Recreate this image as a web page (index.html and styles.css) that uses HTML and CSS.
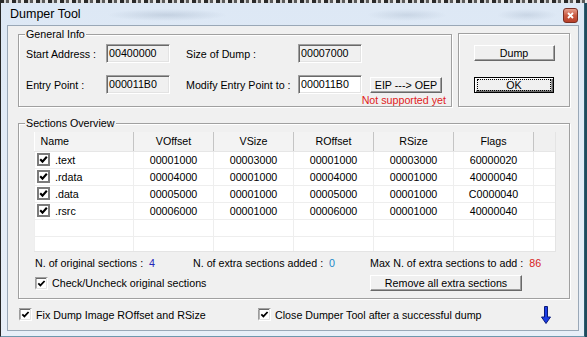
FILE: index.html
```html
<!DOCTYPE html>
<html lang="en">
<head>
    <meta charset="UTF-8">
    <title>Dumper Tool</title>
    <link rel="stylesheet" href="styles.css">
</head>
<body>
    <svg class="defs" width="0" height="0">
        <symbol id="chk-list" viewBox="0 0 13 13">
            <rect x="1" y="1" width="11" height="11" fill="#fff" stroke="#7b7b7b" stroke-width="2"/>
            <path d="M3.2 6.2l2.3 2.4 4.3-4.8" fill="none" stroke="#000" stroke-width="2.1"/>
        </symbol>
        <symbol id="chk" viewBox="0 0 13 13">
            <rect x="0" y="0" width="13" height="13" fill="#fff"/>
            <path d="M0 12.5V0.5H12.5" fill="none" stroke="#a0a0a0"/>
            <path d="M1 11.5V1.5H11.5" fill="none" stroke="#696969"/>
            <path d="M1.5 11.5H11.5V1" fill="none" stroke="#e3e3e3"/>
            <path d="M3.3 6.3l2.1 2.1 4.2-4.4" fill="none" stroke="#000" stroke-width="1.8"/>
        </symbol>
    </svg>

    <div class="backdrop"></div>
    <div class="window">
        <div class="titlebar">
            <span class="title">Dumper Tool</span>
            <div class="close">
                <svg width="7" height="7" viewBox="0 0 7 7"><path d="M1 1l5 5M6 1l-5 5" stroke="#fff" stroke-width="1.8"/></svg>
            </div>
        </div>

        <div class="client">
            <div class="top">
                <div class="group general">
                    <span class="group-title">General Info</span>
                    <div class="row">
                        <span class="lbl lbl-a">Start Address :</span>
                        <div class="field readonly">00400000</div>
                        <span class="lbl lbl-b">Size of Dump :</span>
                        <div class="field readonly">00007000</div>
                    </div>
                    <div class="row">
                        <span class="lbl lbl-a">Entry Point :</span>
                        <div class="field readonly">000011B0</div>
                        <span class="lbl lbl-b">Modify Entry Point to :</span>
                        <div class="field">000011B0</div>
                        <button class="btn btn-eip">EIP ---&gt; OEP</button>
                    </div>
                    <div class="note">Not supported yet</div>
                </div>

                <div class="group actions">
                    <button class="btn btn-dump">Dump</button>
                    <button class="btn btn-ok"><span>OK</span></button>
                </div>
            </div>

            <div class="group sections">
                <span class="group-title">Sections Overview</span>
                <div class="list">
                    <table class="grid">
                        <colgroup>
                            <col class="c-name"><col class="c-num"><col class="c-num"><col class="c-num"><col class="c-num"><col class="c-num"><col>
                        </colgroup>
                        <thead>
                            <tr>
                                <th class="name">Name</th>
                                <th>VOffset</th>
                                <th>VSize</th>
                                <th>ROffset</th>
                                <th>RSize</th>
                                <th>Flags</th>
                                <th class="blank"></th>
                            </tr>
                        </thead>
                        <tbody>
                            <tr>
                                <td class="name"><svg class="box" width="13" height="13"><use href="#chk-list"/></svg>.text</td>
                                <td>00001000</td><td>00003000</td><td>00001000</td><td>00003000</td><td>60000020</td><td></td>
                            </tr>
                            <tr>
                                <td class="name"><svg class="box" width="13" height="13"><use href="#chk-list"/></svg>.rdata</td>
                                <td>00004000</td><td>00001000</td><td>00004000</td><td>00001000</td><td>40000040</td><td></td>
                            </tr>
                            <tr>
                                <td class="name"><svg class="box" width="13" height="13"><use href="#chk-list"/></svg>.data</td>
                                <td>00005000</td><td>00001000</td><td>00005000</td><td>00001000</td><td>C0000040</td><td></td>
                            </tr>
                            <tr>
                                <td class="name"><svg class="box" width="13" height="13"><use href="#chk-list"/></svg>.rsrc</td>
                                <td>00006000</td><td>00001000</td><td>00006000</td><td>00001000</td><td>40000040</td><td></td>
                            </tr>
                            <tr><td></td><td></td><td></td><td></td><td></td><td></td><td></td></tr>
                            <tr><td></td><td></td><td></td><td></td><td></td><td></td><td></td></tr>
                        </tbody>
                    </table>
                </div>

                <div class="stats">
                    <div class="stat stat-1">N. of original sections : <span class="val blue">4</span></div>
                    <div class="stat stat-2">N. of extra sections added : <span class="val teal">0</span></div>
                    <div class="stat stat-3">Max N. of extra sections to add : <span class="val red">86</span></div>
                </div>

                <div class="check-row">
                    <label class="check check-wide"><svg width="13" height="13"><use href="#chk"/></svg>Check/Uncheck original sections</label>
                    <button class="btn btn-remove">Remove all extra sections</button>
                </div>
            </div>

            <div class="bottom">
                <label class="check check-fix"><svg width="13" height="13"><use href="#chk"/></svg>Fix Dump Image ROffset and RSize</label>
                <label class="check check-close"><svg width="13" height="13"><use href="#chk"/></svg>Close Dumper Tool after a successful dump</label>
                <svg class="arrow" width="10" height="18" viewBox="0 0 10 18"><path d="M3.5 0.5h3v10.5h3l-4.5 6.5l-4.5-6.5h3z" fill="#1c3ee6" stroke="#0b1a78"/></svg>
            </div>
        </div>
    </div>
</body>
</html>
```

FILE: styles.css
```css
* {
    box-sizing: border-box;
}
body {
    margin: 0;
    width: 587px;
    height: 337px;
    overflow: hidden;
    background-color: #1f4a5c;
    font-family: "Liberation Sans", Arial, sans-serif;
    font-size: 10.7px;
    color: #000;
}
.defs {
    position: absolute;
    width: 0;
    height: 0;
}
.backdrop {
    height: 3px;
    background: repeating-linear-gradient(90deg, #2a2a2a 0 4px, #cfcfcf 4px 6px, #5a5a5a 6px 9px, #e6e6e6 9px 12px);
}
.window {
    width: 585px;
    height: 334px;
    display: flex;
    flex-direction: column;
    padding: 0 5px 5px 6px;
    border: 1px solid #262626;
    border-top: 0;
    border-right-color: #2d5c70;
    border-bottom-color: #6f97ad;
    background: linear-gradient(#dde8f5, #e8eff8);
}
.titlebar {
    height: 22px;
    display: flex;
    align-items: center;
    background:
        radial-gradient(60px 6px at 160px 12px, rgba(120, 140, 165, 0.25), transparent),
        radial-gradient(40px 6px at 400px 12px, rgba(120, 140, 165, 0.2), transparent),
        radial-gradient(30px 6px at 520px 12px, rgba(120, 140, 165, 0.2), transparent);
}
.title {
    padding-left: 3px;
    font-size: 12.5px;
}
.close {
    margin-left: auto;
    margin-right: 1px;
    margin-top: 2px;
    width: 15px;
    height: 15px;
    display: flex;
    align-items: center;
    justify-content: center;
    border: 1px solid #7a2e22;
    border-radius: 3px;
    background: linear-gradient(#e8a08e, #c95a42 50%, #b8402a);
}
.client {
    flex: 1;
    display: flex;
    flex-direction: column;
    padding: 8px 8px 0 10px;
    border: 1px solid #9aa8b7;
    background-color: #f0f0f0;
}
.top {
    display: flex;
    gap: 6px;
}
.group {
    position: relative;
    border: 1px solid #a0a0a0;
    box-shadow: inset 1px 1px #fff, 1px 1px #fff;
}
.group-title {
    position: absolute;
    top: -7px;
    left: 6px;
    padding: 0 1px;
    line-height: 13px;
    background-color: #f0f0f0;
}
.general {
    width: 434px;
    height: 73px;
    padding: 9px 0 0 7px;
}
.row {
    display: flex;
    align-items: center;
    height: 19px;
}
.row + .row {
    margin-top: 12px;
}
.lbl-a {
    width: 80px;
}
.lbl-b {
    width: 112px;
    margin-left: 16px;
}
.field {
    width: 64px;
    height: 19px;
    padding: 0 2px;
    line-height: 16px;
    border: 1px solid;
    border-color: #a0a0a0 #fff #fff #a0a0a0;
    box-shadow: inset 1px 1px #696969, inset -1px -1px #e3e3e3;
    background-color: #fff;
}
.field.readonly {
    background-color: #f0f0f0;
}
.note {
    text-align: right;
    padding-right: 5px;
    line-height: 12px;
    color: #e01b1b;
}
.btn {
    height: 16px;
    padding: 0;
    font-family: inherit;
    font-size: 10.7px;
    color: #000;
    background-color: #f0f0f0;
    border: 1px solid;
    border-color: #fff #696969 #696969 #fff;
    box-shadow: inset -1px -1px #a0a0a0;
}
.btn-eip {
    width: 72px;
    margin-left: 8px;
}
.actions {
    width: 112px;
    height: 74px;
    margin-top: -1px;
    display: flex;
    flex-direction: column;
    align-items: center;
    gap: 16px;
    padding-top: 11px;
}
.btn-dump {
    width: 81px;
}
.btn-ok {
    width: 80px;
    border: 1px solid #000;
    box-shadow: inset 1px 1px #fff, inset -1px -1px #696969, inset -2px -2px #a0a0a0;
}
.btn-ok span {
    display: block;
    margin: 2px 3px;
    line-height: 10px;
    outline: 1px dotted #000;
}
.sections {
    margin-top: 16px;
    height: 176px;
    padding: 8px 0 0 15px;
}
.list {
    width: 522px;
    height: 120px;
    overflow: hidden;
    background-color: #fff;
    border-right: 1px solid #e4e4e4;
    border-bottom: 1px solid #e4e4e4;
}
.grid {
    width: 522px;
    table-layout: fixed;
    border-collapse: collapse;
}
.c-name {
    width: 99px;
}
.c-num {
    width: 80px;
}
.grid th {
    height: 19px;
    padding: 0;
    font-weight: normal;
    background-color: #f3f3f3;
    border-right: 1px solid #c4c4c4;
    border-bottom: 1px solid #e6e6e6;
}
.grid th.name {
    text-align: left;
    padding-left: 6px;
}
.grid th.blank {
    border-right: 0;
    background-color: #f0f0f0;
}
.grid td {
    height: 17px;
    padding: 0;
    text-align: center;
    border: 1px solid #eeeeee;
    border-top: 0;
}
.grid td.name {
    text-align: left;
    padding-left: 2px;
}
.box {
    vertical-align: -2px;
    margin-right: 5px;
}
.stats {
    display: flex;
    margin-top: 4px;
    padding-left: 1px;
    line-height: 14px;
}
.stat-1 {
    width: 158px;
}
.stat-2 {
    width: 177px;
}
.val {
    margin-left: 3px;
}
.blue {
    color: #2323b8;
}
.teal {
    color: #1e88c8;
}
.red {
    color: #d81e1e;
}
.check-row {
    display: flex;
    align-items: center;
    margin-top: 5px;
    padding-left: 1px;
    height: 16px;
}
.check {
    display: flex;
    align-items: center;
    gap: 4px;
}
.check-wide {
    width: 335px;
}
.btn-remove {
    width: 152px;
}
.bottom {
    display: flex;
    align-items: center;
    height: 13px;
    margin-top: 9px;
    padding-left: 1px;
}
.check-fix {
    width: 239px;
}
.check-close {
    width: 283px;
}
```
